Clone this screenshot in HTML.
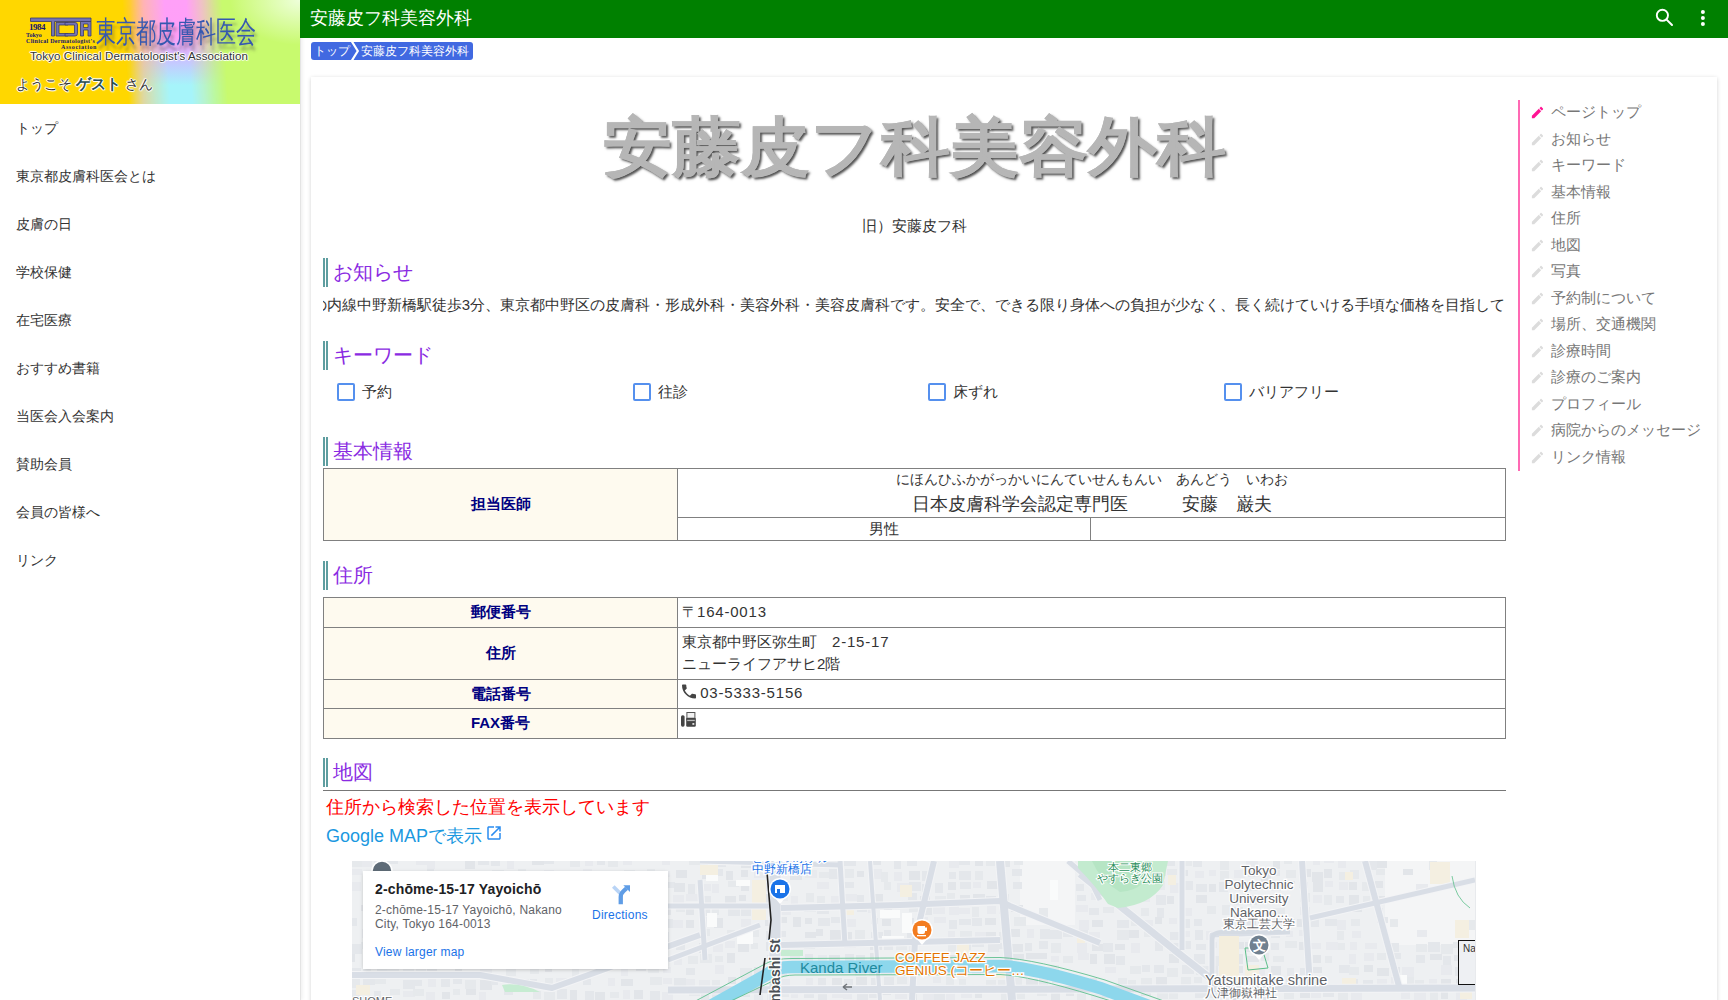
<!DOCTYPE html>
<html lang="ja"><head><meta charset="utf-8">
<style>
*{box-sizing:border-box}
html,body{margin:0;padding:0;width:1728px;height:1000px;overflow:hidden;background:#fff;font-family:"Liberation Sans",sans-serif;color:#333}
#side{position:absolute;left:0;top:0;width:301px;height:1000px;background:#fff;border-right:1px solid #e4e4e4;box-shadow:1px 0 4px rgba(0,0,0,.08);z-index:3}
#shead{position:absolute;left:0;top:0;width:300px;height:104px;overflow:hidden;background:linear-gradient(90deg,#ffd700 0,#ffd700 130px,#ffc870 144px,#d8f080 202px,#c8fa6e 214px,#c8fa6e 300px)}
#band{position:absolute;left:122px;top:0;width:100px;height:104px;transform:skewX(3.5deg);transform-origin:0 0;background:linear-gradient(180deg,#ffa0f8 0,#ff9ff8 35%,#c8c4ff 58%,#a6f4fa 82%,#a6f4fa 100%);-webkit-mask-image:linear-gradient(90deg,transparent 0,#000 42%,#000 64%,transparent 100%)}
#spot{position:absolute;left:0;top:0;width:300px;height:104px;background:radial-gradient(ellipse 70px 45px at 300px 0px,rgba(240,255,225,.95),rgba(240,255,225,0))}
.menu{position:absolute;left:16px;font-size:14px;color:#333;line-height:20px}
#bar{position:absolute;left:300px;top:0;width:1428px;height:38px;background:#008000;color:#fff;z-index:4}
#bar .t{position:absolute;left:10px;top:6px;font-size:18px;line-height:24px}
#crumb{position:absolute;left:311px;top:42px;height:18px;background:#4169e1;border-radius:3px;color:#fff;font-size:12px;line-height:18px}
#card{position:absolute;left:311px;top:77px;width:1406px;height:1000px;background:#fff;box-shadow:0 1px 4px rgba(0,0,0,.18)}
.h{position:absolute;left:323px;height:29px;border-left:5px double #5f9ea0;padding-left:5px;color:#8a2be2;font-size:20px;line-height:29px}
.tbl{position:absolute;left:323px;width:1183px;border-collapse:collapse}
.tbl td{border:1px solid #808080;padding:0}
.tbl th{border:1px solid #808080;background:#fefaef;color:#000080;font-weight:bold;font-size:15px;width:354px}

#crumb{white-space:nowrap;width:162px;overflow:hidden}#crumb .c1{display:inline-block;padding:0 0 0 2.5px;vertical-align:top}#crumb .c2{display:inline-block;padding:0 0 0 0;vertical-align:top}
#title{position:absolute;left:311px;width:1207px;top:98px;text-align:center;font-size:69px;font-weight:bold;line-height:100px;color:#b6b6b6;-webkit-text-stroke:0.4px #b6b6b6;text-shadow:2px 2px 2.5px #505050;transform:scaleY(0.93);transform-origin:50% 49px}
#old{position:absolute;left:311px;width:1207px;top:216px;text-align:center;font-size:15px;line-height:20px;color:#333}
#marq{position:absolute;left:323px;top:294px;width:1183px;height:22px;overflow:hidden;white-space:nowrap;font-size:15px;line-height:22px;color:#333}
#marq div{position:absolute;right:1px;top:0}
.kw{position:absolute;top:382px;height:20px;font-size:15px;line-height:20px;color:#333}
.kw .cb{display:inline-block;width:18px;height:18px;border:2px solid #5590ee;vertical-align:top;margin:1px 7px 0 0;border-radius:2px}
.ruby{font-size:14px;line-height:20px;color:#333;margin-top:-1px}
.rb{font-size:18px;line-height:26px;color:#333;margin-bottom:1px;position:relative;top:1.5px}
.t2 td{font-size:15px;padding-left:4px;line-height:22px;padding-bottom:2px}.dg{letter-spacing:0.8px}
#maprule{position:absolute;left:323px;top:790px;width:1183px;height:1px;background:#777}
#redtxt{position:absolute;left:326px;top:795px;font-size:18px;line-height:24px;color:#f00}
#gmap{position:absolute;left:326px;top:824px;font-size:18px;line-height:24px;color:#1b98e0}
#map{position:absolute;left:352px;top:861px;width:1124px;height:139px;background:#e8eaed;overflow:hidden}
#tocline{position:absolute;left:1518px;top:100px;width:2px;height:371px;background:#ff69b4}
.toc{position:absolute;left:1531px;height:20px;line-height:20px;font-size:15px;color:#777;white-space:nowrap}
.toc .pi{position:absolute;left:-1px;top:3px}
.toc .tt{position:absolute;left:20px;top:0}

.lg1{position:absolute;left:29px;top:22px;font-family:"Liberation Serif",serif;font-weight:bold;font-size:9px;line-height:10px;color:#14146e;letter-spacing:-0.5px}
.lg2{position:absolute;font-family:"Liberation Serif",serif;font-weight:bold;font-size:6px;line-height:6px;color:#14146e;white-space:nowrap}
#kai{position:absolute;left:96px;top:12px;font-size:30px;line-height:40px;color:#3558b0;white-space:nowrap;transform:scaleX(0.667);transform-origin:0 0;text-shadow:3px 5px 4px rgba(60,60,60,.45)}
#tcda{position:absolute;left:30px;top:48px;font-size:11.5px;line-height:16px;color:#333;white-space:nowrap;letter-spacing:0.1px;text-shadow:1px 0 0 rgba(255,255,255,.9),-1px 0 0 rgba(255,255,255,.9),0 1px 0 rgba(255,255,255,.9),0 -1px 0 rgba(255,255,255,.9),1px 1px 1px rgba(255,255,255,.7),-1px -1px 1px rgba(255,255,255,.7)}
#welcome{position:absolute;left:16px;top:74px;font-size:14px;line-height:20px;color:#333;white-space:nowrap;text-shadow:1px 0 0 rgba(255,255,255,.9),-1px 0 0 rgba(255,255,255,.9),0 1px 0 rgba(255,255,255,.9),0 -1px 0 rgba(255,255,255,.9),1px 1px 1px rgba(255,255,255,.7),-1px -1px 1px rgba(255,255,255,.7)}
#welcome b{color:#2a5050;font-weight:bold;font-size:15px}

#mcard{position:absolute;left:11px;top:10px;width:305px;height:98px;background:#fff;box-shadow:0 1px 4px -1px rgba(0,0,0,.3);font-family:"Liberation Sans",sans-serif}
#mcard .mt{position:absolute;left:12px;top:10px;font-size:14px;line-height:17px;font-weight:bold;color:#202124;white-space:nowrap;letter-spacing:0.15px}
#mcard .ma{position:absolute;left:12px;top:32px;font-size:12px;line-height:14px;color:#5f6368;white-space:nowrap;letter-spacing:0.2px}
#mcard .mv{position:absolute;left:12px;top:74px;font-size:12px;line-height:14px;color:#1a73e8;white-space:nowrap;letter-spacing:0.2px}
#mcard .md{position:absolute;left:229px;top:37px;font-size:12px;line-height:14px;color:#1a73e8;white-space:nowrap;letter-spacing:0.25px}
</style></head><body>
<div id="side">
 <div id="shead">
  <div id="band"></div><div id="spot"></div>
  <svg style="position:absolute;left:0;top:0" width="100" height="50" viewBox="0 0 100 50">
   <g fill="#7474b4" stroke="#3a3a6a" stroke-width="0.8">
    <path d="M30.5 18 H91 V21.5 H54.5 V36 H51.5 V21.5 H30.5 Z"/>
    <path d="M56 22.5 H68 V25 H59 V33.5 H68 V36 H56 Z"/>
    <path d="M65 22.5 H75 Q77.5 22.5 77.5 25 V33.5 Q77.5 36 75 36 H65 V33.5 H74.5 V25 H65 Z"/>
    <path d="M80.5 36 V21.5 H91 V36 H88 V30 H83.5 V36 Z M83.5 27.5 H88 V24 H83.5 Z"/>
   </g>
  </svg>
  <div class="lg1">1984</div>
  <div class="lg2" style="left:26px;top:32px">Tokyo</div>
  <div class="lg2" style="left:26px;top:38px;letter-spacing:0.3px">Clinical Dermatologist's</div>
  <div class="lg2" style="left:61px;top:44px;letter-spacing:0.6px">Association</div>
  <div id="kai">東京都皮膚科医会</div>
  <div id="tcda">Tokyo Clinical Dermatologist's Association</div>
  <div id="welcome">ようこそ <b>ゲスト</b> さん</div>
 </div>
 <div class="menu" style="top:118px">トップ</div>
 <div class="menu" style="top:166px">東京都皮膚科医会とは</div>
 <div class="menu" style="top:214px">皮膚の日</div>
 <div class="menu" style="top:262px">学校保健</div>
 <div class="menu" style="top:310px">在宅医療</div>
 <div class="menu" style="top:358px">おすすめ書籍</div>
 <div class="menu" style="top:406px">当医会入会案内</div>
 <div class="menu" style="top:454px">賛助会員</div>
 <div class="menu" style="top:502px">会員の皆様へ</div>
 <div class="menu" style="top:550px">リンク</div>
</div>

<div id="bar"><div class="t">安藤皮フ科美容外科</div>
 <svg style="position:absolute;left:1352px;top:4px" width="24" height="24" viewBox="0 0 24 24"><circle cx="10.4" cy="11.3" r="5.6" fill="none" stroke="#fff" stroke-width="1.9"/><path d="M14.6 15.6L20 21" stroke="#fff" stroke-width="2" stroke-linecap="round"/></svg>
 <svg style="position:absolute;left:1390px;top:6px" width="24" height="24" viewBox="0 0 24 24"><circle cx="12.9" cy="6.1" r="2" fill="#fff"/><circle cx="12.9" cy="12" r="2" fill="#fff"/><circle cx="12.9" cy="18" r="2" fill="#fff"/></svg>
</div>
<div id="crumb"><span class="c1">トップ</span><svg width="11" height="18" style="vertical-align:top"><path d="M1.6 -1 L7.8 9 L1.6 19" fill="none" stroke="#fff" stroke-width="2.2"/></svg><span class="c2">安藤皮フ科美容外科</span></div>
<div id="card"></div>
<div id="title">安藤皮フ科美容外科</div>
<div id="old">旧）安藤皮フ科</div>
<div class="h" style="top:258px">お知らせ</div>
<div id="marq"><div>丸の内線中野新橋駅徒歩3分、東京都中野区の皮膚科・形成外科・美容外科・美容皮膚科です。安全で、できる限り身体への負担が少なく、長く続けていける手頃な価格を目指して</div></div>
<div class="h" style="top:341px">キーワード</div>
<div class="kw" style="left:337px"><span class="cb"></span>予約</div>
<div class="kw" style="left:633px"><span class="cb"></span>往診</div>
<div class="kw" style="left:928px"><span class="cb"></span>床ずれ</div>
<div class="kw" style="left:1224px"><span class="cb"></span>バリアフリー</div>
<div class="h" style="top:437px">基本情報</div>
<table class="tbl" style="top:468px">
 <tr style="height:49px"><th rowspan="2">担当医師</th><td colspan="2" style="text-align:center"><div class="ruby">にほんひふかがっかいにんていせんもんい　あんどう　いわお</div><div class="rb">日本皮膚科学会認定専門医　　　安藤　巌夫</div></td></tr>
 <tr style="height:23px"><td style="text-align:center;width:413px;font-size:15px">男性</td><td></td></tr>
</table>
<div class="h" style="top:561px">住所</div>
<table class="tbl t2" style="top:597px">
 <tr style="height:30px"><th>郵便番号</th><td>〒<span class="dg">164-0013</span></td></tr>
 <tr style="height:52px"><th>住所</th><td>東京都中野区弥生町　<span class="dg">2-15-17</span><br>ニューライフアサヒ2階</td></tr>
 <tr style="height:29px"><th>電話番号</th><td><svg width="14" height="15" viewBox="3 3 18 18" style="vertical-align:-1px"><path fill="#444" d="M6.62 10.79c1.44 2.83 3.76 5.14 6.59 6.59l2.2-2.2c.27-.27.67-.36 1.02-.24 1.12.37 2.33.57 3.57.57.55 0 1 .45 1 1V20c0 .55-.45 1-1 1-9.39 0-17-7.61-17-17 0-.55.45-1 1-1h3.5c.55 0 1 .45 1 1 0 1.250.2 2.45.57 3.57.11.35.03.74-.25 1.02l-2.2 2.2z"/></svg> <span class="dg">03-5333-5156</span></td></tr>
 <tr style="height:30px"><th>FAX番号</th><td><svg width="15" height="15" viewBox="0 0 15 15" style="vertical-align:top;margin:0 0 0 -1px"><rect x="0" y="3.2" width="3.6" height="11.5" rx="1.6" fill="#444"/><rect x="5.9" y="0.5" width="8" height="7" fill="#f2f2f2" stroke="#555" stroke-width="1"/><rect x="5.2" y="5.8" width="9.6" height="9" rx="1.3" fill="#444"/><rect x="6.2" y="7.8" width="7.6" height="1.3" fill="#bbb"/><rect x="11.4" y="11" width="1.9" height="1.9" fill="#ddd"/></svg></td></tr>
</table>
<div class="h" style="top:758px">地図</div>
<div id="maprule"></div>
<div id="redtxt">住所から検索した位置を表示しています</div>
<div id="gmap">Google MAPで表示 <svg width="18" height="18" viewBox="0 0 24 24" style="vertical-align:0px;margin-left:-2px"><path fill="#2a8cf0" d="M19 19H5V5h7V3H5c-1.11 0-2 .9-2 2v14c0 1.1.89 2 2 2h14c1.1 0 2-.9 2-2v-7h-2v7zM14 3v2h3.59l-9.83 9.83 1.41 1.41L19 6.41V10h2V3h-7z"/></svg></div>
<div id="map"><svg width="1123" height="139" viewBox="0 0 1123 139" style="position:absolute;left:0;top:0"><rect width="1124" height="139" fill="#eef0f2"/><rect x="1033" y="0" width="90" height="84" fill="#f4f5f6"/><rect x="668" y="0" width="55" height="64" fill="#f4f5f6"/><rect x="788" y="0" width="20" height="9" fill="#f4f5f6"/><rect x="-1" y="-3" width="11" height="9" fill="#e6e9ec"/><rect x="10" y="-4" width="10" height="10" fill="#e8eaee"/><rect x="22" y="-1" width="7" height="10" fill="#e8eaee"/><rect x="35" y="-4" width="11" height="7" fill="#e4e7eb"/><rect x="64" y="-2" width="11" height="6" fill="#e8eaee"/><rect x="75" y="-2" width="8" height="10" fill="#e8eaee"/><rect x="113" y="-2" width="10" height="10" fill="#e2e5e9"/><rect x="126" y="-4" width="11" height="8" fill="#e4e7eb"/><rect x="139" y="-4" width="9" height="9" fill="#e4e7eb"/><rect x="155" y="-1" width="7" height="9" fill="#e8eaee"/><rect x="180" y="-4" width="12" height="8" fill="#e2e5e9"/><rect x="192" y="-3" width="10" height="6" fill="#e4e7eb"/><rect x="218" y="-1" width="10" height="7" fill="#e6e9ec"/><rect x="233" y="-4" width="8" height="9" fill="#e8eaee"/><rect x="245" y="-2" width="8" height="6" fill="#e4e7eb"/><rect x="256" y="-4" width="10" height="10" fill="#e6e9ec"/><rect x="271" y="-2" width="9" height="6" fill="#e8eaee"/><rect x="310" y="-2" width="8" height="6" fill="#e8eaee"/><rect x="337" y="-3" width="11" height="7" fill="#e6e9ec"/><rect x="348" y="-3" width="8" height="10" fill="#e6e9ec"/><rect x="363" y="-1" width="11" height="7" fill="#e4e7eb"/><rect x="373" y="-2" width="7" height="6" fill="#e6e9ec"/><rect x="389" y="-1" width="10" height="8" fill="#e2e5e9"/><rect x="400" y="-3" width="12" height="6" fill="#e8eaee"/><rect x="412" y="-2" width="11" height="10" fill="#e6e9ec"/><rect x="425" y="-2" width="8" height="6" fill="#e8eaee"/><rect x="439" y="-2" width="7" height="6" fill="#e2e5e9"/><rect x="453" y="-3" width="8" height="6" fill="#e8eaee"/><rect x="465" y="-4" width="12" height="10" fill="#e4e7eb"/><rect x="477" y="-4" width="9" height="8" fill="#e4e7eb"/><rect x="492" y="-3" width="12" height="8" fill="#e4e7eb"/><rect x="517" y="-2" width="12" height="6" fill="#e2e5e9"/><rect x="542" y="-1" width="7" height="9" fill="#e4e7eb"/><rect x="555" y="-4" width="10" height="9" fill="#e4e7eb"/><rect x="597" y="-1" width="10" height="8" fill="#e8eaee"/><rect x="607" y="-2" width="11" height="6" fill="#e4e7eb"/><rect x="623" y="-1" width="8" height="6" fill="#e2e5e9"/><rect x="634" y="-3" width="9" height="8" fill="#e6e9ec"/><rect x="649" y="-3" width="9" height="9" fill="#e2e5e9"/><rect x="662" y="-3" width="9" height="7" fill="#e6e9ec"/><rect x="726" y="-3" width="7" height="6" fill="#e4e7eb"/><rect x="740" y="-1" width="9" height="7" fill="#e8eaee"/><rect x="753" y="-2" width="12" height="10" fill="#e4e7eb"/><rect x="763" y="-2" width="9" height="10" fill="#e2e5e9"/><rect x="777" y="-1" width="11" height="6" fill="#e8eaee"/><rect x="815" y="-1" width="8" height="6" fill="#e4e7eb"/><rect x="828" y="-3" width="12" height="8" fill="#e6e9ec"/><rect x="841" y="-1" width="9" height="7" fill="#e4e7eb"/><rect x="868" y="-1" width="9" height="10" fill="#e6e9ec"/><rect x="894" y="-1" width="12" height="9" fill="#e8eaee"/><rect x="921" y="-1" width="7" height="9" fill="#e2e5e9"/><rect x="932" y="-3" width="8" height="6" fill="#e6e9ec"/><rect x="947" y="-2" width="7" height="8" fill="#e4e7eb"/><rect x="961" y="-2" width="7" height="6" fill="#e8eaee"/><rect x="972" y="-4" width="10" height="6" fill="#e8eaee"/><rect x="986" y="-3" width="8" height="10" fill="#e8eaee"/><rect x="1013" y="-1" width="12" height="10" fill="#e4e7eb"/><rect x="1025" y="-3" width="10" height="10" fill="#e2e5e9"/><rect x="1077" y="-1" width="8" height="10" fill="#e6e9ec"/><rect x="-1" y="8" width="11" height="6" fill="#e8eaee"/><rect x="38" y="10" width="10" height="9" fill="#e6e9ec"/><rect x="51" y="11" width="8" height="8" fill="#e2e5e9"/><rect x="75" y="8" width="7" height="8" fill="#e4e7eb"/><rect x="102" y="10" width="12" height="8" fill="#e6e9ec"/><rect x="113" y="10" width="7" height="9" fill="#e6e9ec"/><rect x="129" y="11" width="10" height="6" fill="#e6e9ec"/><rect x="140" y="9" width="12" height="10" fill="#e6e9ec"/><rect x="153" y="10" width="12" height="8" fill="#e2e5e9"/><rect x="166" y="8" width="8" height="7" fill="#e6e9ec"/><rect x="180" y="11" width="8" height="6" fill="#e4e7eb"/><rect x="192" y="9" width="10" height="10" fill="#e8eaee"/><rect x="205" y="10" width="7" height="6" fill="#e2e5e9"/><rect x="231" y="8" width="9" height="10" fill="#e8eaee"/><rect x="272" y="9" width="11" height="10" fill="#e6e9ec"/><rect x="295" y="8" width="8" height="8" fill="#e6e9ec"/><rect x="308" y="10" width="10" height="6" fill="#e8eaee"/><rect x="324" y="9" width="11" height="8" fill="#e2e5e9"/><rect x="350" y="11" width="8" height="7" fill="#e2e5e9"/><rect x="361" y="8" width="10" height="7" fill="#e4e7eb"/><rect x="374" y="10" width="7" height="9" fill="#e2e5e9"/><rect x="389" y="9" width="7" height="7" fill="#e2e5e9"/><rect x="402" y="9" width="12" height="8" fill="#e8eaee"/><rect x="414" y="10" width="8" height="6" fill="#e8eaee"/><rect x="438" y="9" width="12" height="10" fill="#e2e5e9"/><rect x="453" y="9" width="12" height="8" fill="#e8eaee"/><rect x="467" y="11" width="11" height="6" fill="#e6e9ec"/><rect x="477" y="8" width="10" height="10" fill="#e4e7eb"/><rect x="493" y="8" width="9" height="9" fill="#e6e9ec"/><rect x="505" y="10" width="7" height="6" fill="#e2e5e9"/><rect x="519" y="8" width="11" height="10" fill="#e8eaee"/><rect x="529" y="11" width="7" height="10" fill="#e6e9ec"/><rect x="542" y="11" width="8" height="9" fill="#e8eaee"/><rect x="557" y="10" width="11" height="9" fill="#e2e5e9"/><rect x="570" y="10" width="9" height="10" fill="#e4e7eb"/><rect x="597" y="11" width="7" height="7" fill="#e4e7eb"/><rect x="607" y="10" width="12" height="9" fill="#e4e7eb"/><rect x="623" y="10" width="8" height="9" fill="#e6e9ec"/><rect x="660" y="8" width="10" height="7" fill="#e4e7eb"/><rect x="727" y="9" width="7" height="8" fill="#e8eaee"/><rect x="740" y="10" width="9" height="10" fill="#e6e9ec"/><rect x="751" y="11" width="12" height="7" fill="#e4e7eb"/><rect x="765" y="10" width="9" height="10" fill="#e2e5e9"/><rect x="777" y="10" width="12" height="10" fill="#e6e9ec"/><rect x="802" y="8" width="12" height="7" fill="#e4e7eb"/><rect x="815" y="8" width="10" height="6" fill="#e6e9ec"/><rect x="829" y="9" width="7" height="6" fill="#e2e5e9"/><rect x="843" y="10" width="9" height="7" fill="#e8eaee"/><rect x="857" y="9" width="7" height="6" fill="#e8eaee"/><rect x="868" y="10" width="9" height="9" fill="#e6e9ec"/><rect x="882" y="9" width="11" height="8" fill="#e8eaee"/><rect x="896" y="10" width="11" height="6" fill="#e4e7eb"/><rect x="909" y="11" width="10" height="10" fill="#e2e5e9"/><rect x="921" y="9" width="7" height="6" fill="#e4e7eb"/><rect x="934" y="9" width="10" height="8" fill="#e6e9ec"/><rect x="947" y="8" width="12" height="8" fill="#e2e5e9"/><rect x="960" y="11" width="11" height="10" fill="#e2e5e9"/><rect x="972" y="8" width="8" height="9" fill="#e2e5e9"/><rect x="987" y="11" width="7" height="8" fill="#e6e9ec"/><rect x="998" y="9" width="9" height="9" fill="#e6e9ec"/><rect x="1024" y="8" width="9" height="6" fill="#e6e9ec"/><rect x="1051" y="8" width="10" height="6" fill="#e2e5e9"/><rect x="-3" y="21" width="12" height="9" fill="#e8eaee"/><rect x="12" y="23" width="11" height="8" fill="#e2e5e9"/><rect x="25" y="23" width="9" height="7" fill="#e4e7eb"/><rect x="37" y="20" width="7" height="9" fill="#e8eaee"/><rect x="48" y="22" width="10" height="10" fill="#e4e7eb"/><rect x="62" y="21" width="10" height="9" fill="#e6e9ec"/><rect x="76" y="21" width="10" height="7" fill="#e8eaee"/><rect x="87" y="23" width="9" height="8" fill="#e2e5e9"/><rect x="101" y="20" width="9" height="7" fill="#e8eaee"/><rect x="126" y="21" width="7" height="8" fill="#e6e9ec"/><rect x="142" y="21" width="11" height="7" fill="#e8eaee"/><rect x="168" y="22" width="8" height="8" fill="#e8eaee"/><rect x="178" y="23" width="9" height="10" fill="#e6e9ec"/><rect x="194" y="22" width="8" height="7" fill="#e4e7eb"/><rect x="207" y="22" width="8" height="6" fill="#e8eaee"/><rect x="218" y="23" width="12" height="9" fill="#e6e9ec"/><rect x="231" y="22" width="8" height="8" fill="#e4e7eb"/><rect x="257" y="21" width="7" height="7" fill="#e4e7eb"/><rect x="269" y="23" width="11" height="10" fill="#e8eaee"/><rect x="297" y="20" width="11" height="10" fill="#e6e9ec"/><rect x="311" y="21" width="12" height="6" fill="#e4e7eb"/><rect x="322" y="22" width="11" height="9" fill="#e2e5e9"/><rect x="336" y="23" width="7" height="10" fill="#e4e7eb"/><rect x="347" y="23" width="12" height="7" fill="#e8eaee"/><rect x="360" y="23" width="7" height="9" fill="#e8eaee"/><rect x="376" y="20" width="11" height="6" fill="#e6e9ec"/><rect x="389" y="22" width="8" height="8" fill="#e2e5e9"/><rect x="401" y="21" width="11" height="6" fill="#e6e9ec"/><rect x="414" y="22" width="7" height="8" fill="#e8eaee"/><rect x="428" y="20" width="9" height="9" fill="#e4e7eb"/><rect x="465" y="21" width="12" height="7" fill="#e8eaee"/><rect x="490" y="21" width="12" height="6" fill="#e4e7eb"/><rect x="532" y="21" width="7" height="8" fill="#e6e9ec"/><rect x="545" y="22" width="12" height="9" fill="#e8eaee"/><rect x="557" y="21" width="12" height="9" fill="#e4e7eb"/><rect x="570" y="23" width="8" height="8" fill="#e4e7eb"/><rect x="583" y="22" width="8" height="10" fill="#e4e7eb"/><rect x="596" y="21" width="8" height="8" fill="#e2e5e9"/><rect x="608" y="21" width="11" height="7" fill="#e4e7eb"/><rect x="621" y="21" width="8" height="6" fill="#e8eaee"/><rect x="635" y="20" width="12" height="8" fill="#e2e5e9"/><rect x="647" y="21" width="7" height="9" fill="#e4e7eb"/><rect x="661" y="21" width="9" height="7" fill="#e4e7eb"/><rect x="724" y="23" width="8" height="7" fill="#e4e7eb"/><rect x="739" y="23" width="12" height="7" fill="#e4e7eb"/><rect x="766" y="20" width="7" height="7" fill="#e8eaee"/><rect x="791" y="20" width="9" height="7" fill="#e4e7eb"/><rect x="805" y="20" width="8" height="9" fill="#e8eaee"/><rect x="818" y="22" width="11" height="10" fill="#e8eaee"/><rect x="831" y="20" width="10" height="9" fill="#e4e7eb"/><rect x="844" y="23" width="11" height="8" fill="#e4e7eb"/><rect x="857" y="23" width="7" height="8" fill="#e2e5e9"/><rect x="867" y="21" width="9" height="10" fill="#e4e7eb"/><rect x="883" y="20" width="8" height="10" fill="#e8eaee"/><rect x="895" y="23" width="11" height="7" fill="#e6e9ec"/><rect x="909" y="21" width="12" height="8" fill="#e6e9ec"/><rect x="919" y="20" width="10" height="10" fill="#e4e7eb"/><rect x="935" y="20" width="8" height="6" fill="#e2e5e9"/><rect x="947" y="21" width="9" height="6" fill="#e4e7eb"/><rect x="961" y="21" width="10" height="10" fill="#e2e5e9"/><rect x="973" y="20" width="8" height="6" fill="#e8eaee"/><rect x="987" y="21" width="9" height="8" fill="#e8eaee"/><rect x="997" y="21" width="8" height="8" fill="#e2e5e9"/><rect x="1010" y="21" width="9" height="9" fill="#e6e9ec"/><rect x="1023" y="20" width="8" height="7" fill="#e2e5e9"/><rect x="1064" y="23" width="12" height="7" fill="#e8eaee"/><rect x="24" y="34" width="12" height="8" fill="#e4e7eb"/><rect x="36" y="33" width="8" height="8" fill="#e2e5e9"/><rect x="64" y="32" width="10" height="6" fill="#e4e7eb"/><rect x="90" y="32" width="11" height="8" fill="#e6e9ec"/><rect x="101" y="34" width="8" height="7" fill="#e4e7eb"/><rect x="129" y="35" width="7" height="10" fill="#e4e7eb"/><rect x="140" y="32" width="10" height="6" fill="#e2e5e9"/><rect x="154" y="33" width="10" height="6" fill="#e6e9ec"/><rect x="180" y="33" width="12" height="9" fill="#e2e5e9"/><rect x="194" y="34" width="8" height="10" fill="#e4e7eb"/><rect x="207" y="33" width="12" height="6" fill="#e2e5e9"/><rect x="246" y="34" width="10" height="10" fill="#e4e7eb"/><rect x="270" y="33" width="11" height="10" fill="#e4e7eb"/><rect x="284" y="35" width="7" height="8" fill="#e4e7eb"/><rect x="298" y="34" width="11" height="7" fill="#e6e9ec"/><rect x="321" y="34" width="11" height="9" fill="#e8eaee"/><rect x="334" y="33" width="12" height="7" fill="#e8eaee"/><rect x="348" y="35" width="11" height="7" fill="#e4e7eb"/><rect x="373" y="35" width="11" height="7" fill="#e2e5e9"/><rect x="387" y="34" width="7" height="6" fill="#e2e5e9"/><rect x="412" y="33" width="10" height="9" fill="#e2e5e9"/><rect x="425" y="33" width="11" height="7" fill="#e8eaee"/><rect x="439" y="35" width="7" height="8" fill="#e8eaee"/><rect x="454" y="32" width="8" height="9" fill="#e6e9ec"/><rect x="465" y="35" width="8" height="7" fill="#e6e9ec"/><rect x="479" y="35" width="11" height="9" fill="#e8eaee"/><rect x="493" y="33" width="12" height="7" fill="#e8eaee"/><rect x="505" y="34" width="7" height="8" fill="#e4e7eb"/><rect x="519" y="33" width="12" height="8" fill="#e2e5e9"/><rect x="556" y="32" width="9" height="7" fill="#e4e7eb"/><rect x="568" y="35" width="10" height="9" fill="#e2e5e9"/><rect x="583" y="35" width="11" height="6" fill="#e6e9ec"/><rect x="595" y="32" width="8" height="7" fill="#e6e9ec"/><rect x="608" y="34" width="10" height="9" fill="#e2e5e9"/><rect x="621" y="33" width="12" height="9" fill="#e2e5e9"/><rect x="634" y="35" width="10" height="9" fill="#e2e5e9"/><rect x="648" y="33" width="9" height="8" fill="#e6e9ec"/><rect x="725" y="34" width="9" height="6" fill="#e4e7eb"/><rect x="739" y="32" width="9" height="7" fill="#e8eaee"/><rect x="765" y="34" width="10" height="9" fill="#e8eaee"/><rect x="779" y="33" width="8" height="7" fill="#e8eaee"/><rect x="789" y="34" width="9" height="7" fill="#e8eaee"/><rect x="804" y="34" width="10" height="10" fill="#e4e7eb"/><rect x="815" y="35" width="7" height="8" fill="#e2e5e9"/><rect x="844" y="34" width="11" height="8" fill="#e2e5e9"/><rect x="882" y="34" width="9" height="10" fill="#e6e9ec"/><rect x="895" y="34" width="10" height="10" fill="#e4e7eb"/><rect x="906" y="35" width="8" height="6" fill="#e8eaee"/><rect x="948" y="32" width="10" height="9" fill="#e6e9ec"/><rect x="961" y="34" width="9" height="8" fill="#e8eaee"/><rect x="972" y="34" width="8" height="10" fill="#e6e9ec"/><rect x="984" y="35" width="8" height="7" fill="#e4e7eb"/><rect x="997" y="34" width="10" height="10" fill="#e2e5e9"/><rect x="1011" y="35" width="7" height="8" fill="#e6e9ec"/><rect x="1025" y="35" width="8" height="7" fill="#e2e5e9"/><rect x="9" y="44" width="8" height="6" fill="#e2e5e9"/><rect x="35" y="45" width="12" height="9" fill="#e8eaee"/><rect x="50" y="47" width="7" height="8" fill="#e8eaee"/><rect x="63" y="46" width="12" height="8" fill="#e6e9ec"/><rect x="75" y="47" width="8" height="10" fill="#e6e9ec"/><rect x="88" y="45" width="9" height="7" fill="#e8eaee"/><rect x="101" y="44" width="9" height="7" fill="#e8eaee"/><rect x="115" y="47" width="8" height="8" fill="#e2e5e9"/><rect x="127" y="44" width="10" height="9" fill="#e6e9ec"/><rect x="140" y="46" width="7" height="6" fill="#e2e5e9"/><rect x="154" y="44" width="7" height="9" fill="#e8eaee"/><rect x="192" y="47" width="12" height="8" fill="#e8eaee"/><rect x="205" y="46" width="11" height="9" fill="#e6e9ec"/><rect x="219" y="47" width="7" height="10" fill="#e8eaee"/><rect x="244" y="46" width="7" height="8" fill="#e8eaee"/><rect x="259" y="45" width="8" height="6" fill="#e2e5e9"/><rect x="270" y="44" width="11" height="6" fill="#e4e7eb"/><rect x="282" y="45" width="9" height="6" fill="#e2e5e9"/><rect x="298" y="44" width="8" height="9" fill="#e8eaee"/><rect x="308" y="45" width="11" height="9" fill="#e2e5e9"/><rect x="324" y="44" width="9" height="7" fill="#e6e9ec"/><rect x="334" y="44" width="8" height="10" fill="#e2e5e9"/><rect x="347" y="47" width="11" height="8" fill="#e4e7eb"/><rect x="360" y="46" width="7" height="8" fill="#e6e9ec"/><rect x="376" y="46" width="12" height="9" fill="#e4e7eb"/><rect x="389" y="46" width="10" height="9" fill="#e4e7eb"/><rect x="427" y="46" width="12" height="8" fill="#e8eaee"/><rect x="440" y="44" width="9" height="6" fill="#e2e5e9"/><rect x="452" y="44" width="12" height="7" fill="#e6e9ec"/><rect x="465" y="46" width="12" height="7" fill="#e4e7eb"/><rect x="490" y="44" width="8" height="9" fill="#e8eaee"/><rect x="505" y="45" width="10" height="6" fill="#e4e7eb"/><rect x="516" y="46" width="9" height="6" fill="#e8eaee"/><rect x="532" y="45" width="8" height="9" fill="#e2e5e9"/><rect x="557" y="44" width="9" height="7" fill="#e6e9ec"/><rect x="568" y="45" width="12" height="9" fill="#e2e5e9"/><rect x="581" y="44" width="12" height="9" fill="#e8eaee"/><rect x="597" y="45" width="10" height="9" fill="#e8eaee"/><rect x="607" y="47" width="11" height="6" fill="#e8eaee"/><rect x="620" y="46" width="7" height="10" fill="#e6e9ec"/><rect x="635" y="45" width="9" height="8" fill="#e8eaee"/><rect x="647" y="47" width="10" height="6" fill="#e4e7eb"/><rect x="659" y="44" width="12" height="7" fill="#e2e5e9"/><rect x="687" y="47" width="9" height="10" fill="#e6e9ec"/><rect x="724" y="44" width="12" height="7" fill="#e8eaee"/><rect x="737" y="47" width="10" height="7" fill="#e4e7eb"/><rect x="751" y="46" width="11" height="6" fill="#e6e9ec"/><rect x="789" y="47" width="8" height="8" fill="#e6e9ec"/><rect x="805" y="47" width="7" height="10" fill="#e4e7eb"/><rect x="829" y="47" width="11" height="8" fill="#e8eaee"/><rect x="855" y="45" width="9" height="8" fill="#e6e9ec"/><rect x="870" y="44" width="8" height="10" fill="#e6e9ec"/><rect x="882" y="46" width="9" height="8" fill="#e6e9ec"/><rect x="921" y="47" width="12" height="8" fill="#e6e9ec"/><rect x="948" y="46" width="10" height="8" fill="#e8eaee"/><rect x="1000" y="44" width="10" height="7" fill="#e2e5e9"/><rect x="1024" y="47" width="7" height="9" fill="#e8eaee"/><rect x="-4" y="57" width="9" height="8" fill="#e4e7eb"/><rect x="11" y="59" width="8" height="10" fill="#e8eaee"/><rect x="22" y="56" width="7" height="10" fill="#e8eaee"/><rect x="35" y="58" width="7" height="8" fill="#e4e7eb"/><rect x="48" y="57" width="12" height="8" fill="#e8eaee"/><rect x="87" y="57" width="10" height="10" fill="#e4e7eb"/><rect x="101" y="56" width="10" height="9" fill="#e4e7eb"/><rect x="127" y="59" width="10" height="7" fill="#e2e5e9"/><rect x="139" y="56" width="11" height="9" fill="#e4e7eb"/><rect x="168" y="56" width="11" height="8" fill="#e8eaee"/><rect x="180" y="56" width="7" height="8" fill="#e4e7eb"/><rect x="191" y="56" width="11" height="10" fill="#e2e5e9"/><rect x="204" y="57" width="11" height="6" fill="#e6e9ec"/><rect x="219" y="58" width="11" height="10" fill="#e2e5e9"/><rect x="233" y="59" width="8" height="10" fill="#e4e7eb"/><rect x="244" y="56" width="11" height="9" fill="#e8eaee"/><rect x="270" y="57" width="11" height="7" fill="#e8eaee"/><rect x="285" y="56" width="12" height="6" fill="#e6e9ec"/><rect x="309" y="58" width="12" height="9" fill="#e4e7eb"/><rect x="321" y="59" width="10" height="8" fill="#e8eaee"/><rect x="334" y="59" width="8" height="8" fill="#e2e5e9"/><rect x="348" y="56" width="8" height="10" fill="#e8eaee"/><rect x="362" y="57" width="9" height="10" fill="#e2e5e9"/><rect x="389" y="58" width="10" height="8" fill="#e8eaee"/><rect x="413" y="59" width="11" height="6" fill="#e2e5e9"/><rect x="427" y="56" width="8" height="6" fill="#e2e5e9"/><rect x="441" y="56" width="8" height="10" fill="#e2e5e9"/><rect x="453" y="57" width="7" height="6" fill="#e2e5e9"/><rect x="466" y="57" width="12" height="8" fill="#e4e7eb"/><rect x="479" y="56" width="10" height="6" fill="#e4e7eb"/><rect x="493" y="58" width="11" height="8" fill="#e8eaee"/><rect x="519" y="57" width="7" height="6" fill="#e2e5e9"/><rect x="530" y="58" width="9" height="7" fill="#e2e5e9"/><rect x="555" y="57" width="7" height="9" fill="#e2e5e9"/><rect x="569" y="56" width="7" height="10" fill="#e8eaee"/><rect x="582" y="56" width="12" height="6" fill="#e8eaee"/><rect x="597" y="59" width="8" height="9" fill="#e4e7eb"/><rect x="607" y="58" width="12" height="6" fill="#e4e7eb"/><rect x="620" y="57" width="10" height="8" fill="#e4e7eb"/><rect x="633" y="57" width="11" height="7" fill="#e2e5e9"/><rect x="649" y="57" width="7" height="9" fill="#e8eaee"/><rect x="662" y="56" width="12" height="9" fill="#e6e9ec"/><rect x="727" y="59" width="10" height="10" fill="#e8eaee"/><rect x="740" y="59" width="11" height="7" fill="#e2e5e9"/><rect x="765" y="59" width="12" height="8" fill="#e4e7eb"/><rect x="779" y="57" width="7" height="8" fill="#e6e9ec"/><rect x="790" y="59" width="11" height="6" fill="#e8eaee"/><rect x="803" y="56" width="7" height="7" fill="#e2e5e9"/><rect x="817" y="57" width="8" height="6" fill="#e8eaee"/><rect x="830" y="58" width="8" height="9" fill="#e4e7eb"/><rect x="842" y="58" width="8" height="7" fill="#e4e7eb"/><rect x="895" y="56" width="9" height="8" fill="#e2e5e9"/><rect x="906" y="57" width="12" height="8" fill="#e2e5e9"/><rect x="934" y="58" width="9" height="8" fill="#e6e9ec"/><rect x="945" y="58" width="7" height="8" fill="#e2e5e9"/><rect x="959" y="57" width="8" height="9" fill="#e4e7eb"/><rect x="973" y="58" width="12" height="7" fill="#e4e7eb"/><rect x="985" y="59" width="9" height="10" fill="#e8eaee"/><rect x="999" y="58" width="9" height="7" fill="#e6e9ec"/><rect x="1025" y="56" width="11" height="6" fill="#e4e7eb"/><rect x="1038" y="58" width="8" height="8" fill="#e6e9ec"/><rect x="1114" y="59" width="11" height="10" fill="#e6e9ec"/><rect x="10" y="68" width="11" height="9" fill="#e8eaee"/><rect x="48" y="69" width="7" height="10" fill="#e2e5e9"/><rect x="62" y="69" width="8" height="8" fill="#e8eaee"/><rect x="77" y="70" width="7" height="10" fill="#e6e9ec"/><rect x="100" y="70" width="7" height="6" fill="#e2e5e9"/><rect x="113" y="69" width="7" height="9" fill="#e6e9ec"/><rect x="126" y="68" width="11" height="10" fill="#e2e5e9"/><rect x="155" y="70" width="10" height="7" fill="#e2e5e9"/><rect x="166" y="70" width="10" height="6" fill="#e4e7eb"/><rect x="180" y="71" width="11" height="8" fill="#e6e9ec"/><rect x="192" y="69" width="10" height="7" fill="#e6e9ec"/><rect x="206" y="69" width="10" height="7" fill="#e6e9ec"/><rect x="219" y="68" width="11" height="8" fill="#e6e9ec"/><rect x="232" y="69" width="7" height="8" fill="#e4e7eb"/><rect x="243" y="69" width="11" height="6" fill="#e8eaee"/><rect x="257" y="70" width="10" height="10" fill="#e2e5e9"/><rect x="296" y="70" width="8" height="9" fill="#e6e9ec"/><rect x="308" y="71" width="9" height="10" fill="#e4e7eb"/><rect x="348" y="68" width="10" height="7" fill="#e6e9ec"/><rect x="375" y="69" width="8" height="8" fill="#e6e9ec"/><rect x="400" y="69" width="7" height="7" fill="#e6e9ec"/><rect x="414" y="70" width="12" height="9" fill="#e4e7eb"/><rect x="426" y="70" width="8" height="6" fill="#e4e7eb"/><rect x="453" y="71" width="11" height="6" fill="#e2e5e9"/><rect x="464" y="68" width="7" height="7" fill="#e2e5e9"/><rect x="478" y="69" width="12" height="10" fill="#e2e5e9"/><rect x="493" y="71" width="7" height="8" fill="#e2e5e9"/><rect x="503" y="69" width="10" height="9" fill="#e6e9ec"/><rect x="519" y="71" width="12" height="6" fill="#e4e7eb"/><rect x="532" y="69" width="7" height="7" fill="#e4e7eb"/><rect x="555" y="71" width="10" height="10" fill="#e4e7eb"/><rect x="596" y="70" width="7" height="8" fill="#e8eaee"/><rect x="608" y="70" width="12" height="8" fill="#e6e9ec"/><rect x="623" y="71" width="11" height="10" fill="#e8eaee"/><rect x="634" y="71" width="10" height="7" fill="#e2e5e9"/><rect x="647" y="71" width="12" height="8" fill="#e6e9ec"/><rect x="659" y="68" width="9" height="8" fill="#e2e5e9"/><rect x="675" y="68" width="7" height="9" fill="#e8eaee"/><rect x="688" y="68" width="10" height="10" fill="#e4e7eb"/><rect x="698" y="69" width="12" height="9" fill="#e4e7eb"/><rect x="711" y="70" width="10" height="6" fill="#e4e7eb"/><rect x="726" y="69" width="10" height="6" fill="#e4e7eb"/><rect x="737" y="71" width="11" height="6" fill="#e8eaee"/><rect x="765" y="69" width="12" height="10" fill="#e6e9ec"/><rect x="777" y="69" width="10" height="8" fill="#e2e5e9"/><rect x="792" y="70" width="8" height="6" fill="#e6e9ec"/><rect x="818" y="71" width="11" height="8" fill="#e4e7eb"/><rect x="830" y="70" width="8" height="6" fill="#e8eaee"/><rect x="843" y="69" width="8" height="10" fill="#e4e7eb"/><rect x="854" y="70" width="10" height="9" fill="#e8eaee"/><rect x="870" y="70" width="10" height="7" fill="#e4e7eb"/><rect x="906" y="69" width="8" height="7" fill="#e8eaee"/><rect x="919" y="70" width="9" height="7" fill="#e4e7eb"/><rect x="934" y="70" width="7" height="6" fill="#e8eaee"/><rect x="947" y="69" width="9" height="6" fill="#e8eaee"/><rect x="985" y="70" width="7" height="9" fill="#e6e9ec"/><rect x="1000" y="70" width="9" height="7" fill="#e8eaee"/><rect x="1065" y="69" width="10" height="7" fill="#e8eaee"/><rect x="-2" y="83" width="12" height="10" fill="#e4e7eb"/><rect x="9" y="81" width="8" height="7" fill="#e6e9ec"/><rect x="24" y="82" width="9" height="10" fill="#e4e7eb"/><rect x="38" y="80" width="10" height="6" fill="#e8eaee"/><rect x="61" y="80" width="7" height="10" fill="#e2e5e9"/><rect x="75" y="83" width="11" height="9" fill="#e8eaee"/><rect x="90" y="81" width="12" height="7" fill="#e8eaee"/><rect x="113" y="83" width="8" height="7" fill="#e8eaee"/><rect x="152" y="81" width="10" height="10" fill="#e6e9ec"/><rect x="167" y="80" width="10" height="10" fill="#e2e5e9"/><rect x="181" y="83" width="8" height="10" fill="#e6e9ec"/><rect x="194" y="81" width="7" height="8" fill="#e2e5e9"/><rect x="207" y="82" width="8" height="9" fill="#e6e9ec"/><rect x="217" y="83" width="10" height="8" fill="#e8eaee"/><rect x="233" y="83" width="11" height="9" fill="#e4e7eb"/><rect x="246" y="83" width="9" height="7" fill="#e6e9ec"/><rect x="256" y="82" width="8" height="10" fill="#e8eaee"/><rect x="282" y="83" width="10" height="8" fill="#e6e9ec"/><rect x="298" y="80" width="9" height="7" fill="#e8eaee"/><rect x="308" y="82" width="8" height="9" fill="#e2e5e9"/><rect x="324" y="81" width="9" height="8" fill="#e4e7eb"/><rect x="347" y="82" width="9" height="10" fill="#e2e5e9"/><rect x="361" y="83" width="10" height="8" fill="#e8eaee"/><rect x="373" y="80" width="10" height="7" fill="#e8eaee"/><rect x="386" y="82" width="11" height="9" fill="#e2e5e9"/><rect x="399" y="82" width="7" height="6" fill="#e6e9ec"/><rect x="414" y="81" width="8" height="9" fill="#e2e5e9"/><rect x="427" y="83" width="11" height="6" fill="#e8eaee"/><rect x="452" y="81" width="11" height="7" fill="#e4e7eb"/><rect x="492" y="80" width="12" height="7" fill="#e8eaee"/><rect x="518" y="81" width="12" height="8" fill="#e2e5e9"/><rect x="532" y="82" width="9" height="7" fill="#e4e7eb"/><rect x="544" y="81" width="11" height="8" fill="#e6e9ec"/><rect x="557" y="83" width="9" height="7" fill="#e8eaee"/><rect x="596" y="82" width="8" height="9" fill="#e6e9ec"/><rect x="610" y="82" width="9" height="7" fill="#e4e7eb"/><rect x="620" y="80" width="12" height="6" fill="#e4e7eb"/><rect x="636" y="83" width="11" height="8" fill="#e4e7eb"/><rect x="647" y="82" width="10" height="6" fill="#e4e7eb"/><rect x="659" y="83" width="12" height="8" fill="#e2e5e9"/><rect x="673" y="82" width="7" height="8" fill="#e4e7eb"/><rect x="687" y="80" width="9" height="8" fill="#e4e7eb"/><rect x="699" y="82" width="10" height="10" fill="#e6e9ec"/><rect x="725" y="82" width="10" height="10" fill="#e8eaee"/><rect x="740" y="83" width="11" height="7" fill="#e2e5e9"/><rect x="751" y="82" width="10" height="9" fill="#e4e7eb"/><rect x="763" y="83" width="10" height="6" fill="#e2e5e9"/><rect x="779" y="82" width="9" height="10" fill="#e8eaee"/><rect x="803" y="80" width="8" height="10" fill="#e4e7eb"/><rect x="818" y="82" width="9" height="10" fill="#e4e7eb"/><rect x="828" y="80" width="11" height="8" fill="#e4e7eb"/><rect x="844" y="83" width="10" height="6" fill="#e4e7eb"/><rect x="857" y="81" width="8" height="6" fill="#e8eaee"/><rect x="869" y="80" width="10" height="10" fill="#e4e7eb"/><rect x="880" y="81" width="12" height="7" fill="#e2e5e9"/><rect x="893" y="81" width="11" height="10" fill="#e2e5e9"/><rect x="919" y="82" width="8" height="7" fill="#e4e7eb"/><rect x="933" y="80" width="12" height="7" fill="#e6e9ec"/><rect x="947" y="81" width="12" height="8" fill="#e2e5e9"/><rect x="958" y="82" width="11" height="6" fill="#e8eaee"/><rect x="974" y="81" width="12" height="8" fill="#e8eaee"/><rect x="986" y="82" width="7" height="7" fill="#e6e9ec"/><rect x="998" y="81" width="7" height="8" fill="#e8eaee"/><rect x="1013" y="82" width="12" height="6" fill="#e8eaee"/><rect x="1036" y="82" width="11" height="9" fill="#e4e7eb"/><rect x="1064" y="83" width="11" height="8" fill="#e6e9ec"/><rect x="1076" y="81" width="12" height="10" fill="#e4e7eb"/><rect x="1089" y="83" width="12" height="10" fill="#e6e9ec"/><rect x="1101" y="81" width="7" height="6" fill="#e6e9ec"/><rect x="1117" y="81" width="8" height="9" fill="#e2e5e9"/><rect x="-4" y="93" width="7" height="8" fill="#e2e5e9"/><rect x="48" y="92" width="10" height="7" fill="#e6e9ec"/><rect x="61" y="93" width="11" height="6" fill="#e2e5e9"/><rect x="87" y="93" width="10" height="7" fill="#e4e7eb"/><rect x="114" y="95" width="10" height="9" fill="#e4e7eb"/><rect x="126" y="92" width="10" height="8" fill="#e6e9ec"/><rect x="142" y="94" width="7" height="9" fill="#e2e5e9"/><rect x="155" y="94" width="8" height="7" fill="#e4e7eb"/><rect x="167" y="94" width="7" height="8" fill="#e2e5e9"/><rect x="181" y="94" width="7" height="7" fill="#e2e5e9"/><rect x="206" y="94" width="12" height="9" fill="#e6e9ec"/><rect x="218" y="94" width="12" height="8" fill="#e8eaee"/><rect x="230" y="95" width="7" height="7" fill="#e2e5e9"/><rect x="244" y="94" width="11" height="9" fill="#e8eaee"/><rect x="257" y="94" width="7" height="8" fill="#e6e9ec"/><rect x="272" y="94" width="9" height="7" fill="#e4e7eb"/><rect x="297" y="95" width="12" height="8" fill="#e4e7eb"/><rect x="322" y="95" width="8" height="9" fill="#e8eaee"/><rect x="336" y="95" width="10" height="8" fill="#e6e9ec"/><rect x="348" y="93" width="12" height="9" fill="#e6e9ec"/><rect x="363" y="95" width="8" height="6" fill="#e6e9ec"/><rect x="375" y="92" width="8" height="10" fill="#e2e5e9"/><rect x="415" y="94" width="9" height="8" fill="#e4e7eb"/><rect x="438" y="92" width="10" height="7" fill="#e6e9ec"/><rect x="453" y="93" width="8" height="10" fill="#e4e7eb"/><rect x="466" y="94" width="9" height="6" fill="#e8eaee"/><rect x="477" y="94" width="11" height="7" fill="#e2e5e9"/><rect x="493" y="93" width="9" height="9" fill="#e4e7eb"/><rect x="504" y="94" width="9" height="9" fill="#e4e7eb"/><rect x="518" y="92" width="9" height="10" fill="#e2e5e9"/><rect x="545" y="95" width="10" height="8" fill="#e8eaee"/><rect x="555" y="92" width="9" height="6" fill="#e8eaee"/><rect x="571" y="93" width="12" height="7" fill="#e8eaee"/><rect x="596" y="94" width="8" height="9" fill="#e2e5e9"/><rect x="607" y="93" width="8" height="6" fill="#e8eaee"/><rect x="660" y="93" width="12" height="6" fill="#e2e5e9"/><rect x="674" y="92" width="11" height="6" fill="#e2e5e9"/><rect x="685" y="92" width="10" height="6" fill="#e2e5e9"/><rect x="699" y="95" width="8" height="6" fill="#e8eaee"/><rect x="711" y="95" width="10" height="7" fill="#e6e9ec"/><rect x="726" y="92" width="11" height="7" fill="#e8eaee"/><rect x="738" y="93" width="7" height="10" fill="#e2e5e9"/><rect x="752" y="93" width="11" height="10" fill="#e2e5e9"/><rect x="764" y="95" width="9" height="9" fill="#e4e7eb"/><rect x="817" y="93" width="10" height="9" fill="#e2e5e9"/><rect x="842" y="93" width="11" height="10" fill="#e4e7eb"/><rect x="857" y="95" width="11" height="10" fill="#e6e9ec"/><rect x="869" y="92" width="9" height="9" fill="#e2e5e9"/><rect x="882" y="93" width="9" height="10" fill="#e2e5e9"/><rect x="895" y="95" width="12" height="6" fill="#e2e5e9"/><rect x="909" y="92" width="8" height="8" fill="#e6e9ec"/><rect x="921" y="95" width="11" height="6" fill="#e6e9ec"/><rect x="961" y="94" width="8" height="8" fill="#e2e5e9"/><rect x="973" y="95" width="7" height="7" fill="#e6e9ec"/><rect x="997" y="93" width="7" height="10" fill="#e8eaee"/><rect x="1012" y="92" width="10" height="8" fill="#e8eaee"/><rect x="1025" y="92" width="9" height="7" fill="#e6e9ec"/><rect x="1037" y="92" width="12" height="6" fill="#e4e7eb"/><rect x="1064" y="94" width="9" height="8" fill="#e4e7eb"/><rect x="1078" y="93" width="12" height="6" fill="#e2e5e9"/><rect x="1091" y="95" width="8" height="10" fill="#e4e7eb"/><rect x="1102" y="94" width="12" height="6" fill="#e4e7eb"/><rect x="1116" y="94" width="10" height="7" fill="#e4e7eb"/><rect x="-1" y="107" width="10" height="6" fill="#e4e7eb"/><rect x="11" y="106" width="8" height="6" fill="#e6e9ec"/><rect x="25" y="107" width="11" height="7" fill="#e4e7eb"/><rect x="35" y="105" width="12" height="9" fill="#e6e9ec"/><rect x="51" y="104" width="11" height="10" fill="#e6e9ec"/><rect x="64" y="107" width="10" height="7" fill="#e6e9ec"/><rect x="75" y="104" width="10" height="10" fill="#e2e5e9"/><rect x="103" y="105" width="7" height="6" fill="#e2e5e9"/><rect x="128" y="107" width="12" height="10" fill="#e8eaee"/><rect x="154" y="105" width="10" height="10" fill="#e6e9ec"/><rect x="178" y="107" width="9" height="6" fill="#e6e9ec"/><rect x="193" y="105" width="7" height="6" fill="#e2e5e9"/><rect x="220" y="106" width="7" height="10" fill="#e6e9ec"/><rect x="244" y="104" width="10" height="7" fill="#e6e9ec"/><rect x="269" y="107" width="7" height="8" fill="#e8eaee"/><rect x="284" y="104" width="10" height="6" fill="#e2e5e9"/><rect x="296" y="106" width="11" height="6" fill="#e6e9ec"/><rect x="311" y="106" width="8" height="6" fill="#e8eaee"/><rect x="334" y="107" width="9" height="7" fill="#e4e7eb"/><rect x="363" y="104" width="9" height="9" fill="#e8eaee"/><rect x="388" y="107" width="12" height="10" fill="#e6e9ec"/><rect x="402" y="106" width="7" height="8" fill="#e2e5e9"/><rect x="414" y="106" width="11" height="10" fill="#e4e7eb"/><rect x="428" y="107" width="7" height="8" fill="#e4e7eb"/><rect x="440" y="106" width="7" height="6" fill="#e6e9ec"/><rect x="479" y="104" width="7" height="6" fill="#e8eaee"/><rect x="493" y="104" width="8" height="6" fill="#e8eaee"/><rect x="503" y="106" width="11" height="9" fill="#e8eaee"/><rect x="517" y="106" width="11" height="9" fill="#e8eaee"/><rect x="529" y="104" width="11" height="10" fill="#e8eaee"/><rect x="569" y="107" width="11" height="8" fill="#e4e7eb"/><rect x="581" y="106" width="9" height="9" fill="#e6e9ec"/><rect x="594" y="107" width="10" height="8" fill="#e8eaee"/><rect x="607" y="104" width="7" height="10" fill="#e8eaee"/><rect x="620" y="107" width="9" height="7" fill="#e8eaee"/><rect x="646" y="105" width="9" height="10" fill="#e2e5e9"/><rect x="662" y="105" width="11" height="9" fill="#e2e5e9"/><rect x="673" y="105" width="12" height="10" fill="#e6e9ec"/><rect x="687" y="106" width="12" height="9" fill="#e2e5e9"/><rect x="699" y="104" width="8" height="6" fill="#e6e9ec"/><rect x="753" y="106" width="11" height="6" fill="#e8eaee"/><rect x="778" y="105" width="11" height="8" fill="#e6e9ec"/><rect x="790" y="104" width="8" height="7" fill="#e4e7eb"/><rect x="802" y="104" width="10" height="8" fill="#e4e7eb"/><rect x="815" y="107" width="11" height="9" fill="#e6e9ec"/><rect x="830" y="104" width="12" height="9" fill="#e4e7eb"/><rect x="844" y="105" width="10" height="9" fill="#e6e9ec"/><rect x="854" y="105" width="12" height="10" fill="#e4e7eb"/><rect x="868" y="105" width="8" height="7" fill="#e8eaee"/><rect x="880" y="105" width="11" height="7" fill="#e2e5e9"/><rect x="895" y="104" width="9" height="6" fill="#e2e5e9"/><rect x="906" y="107" width="7" height="10" fill="#e8eaee"/><rect x="919" y="105" width="10" height="9" fill="#e2e5e9"/><rect x="935" y="107" width="7" height="8" fill="#e6e9ec"/><rect x="948" y="107" width="11" height="7" fill="#e4e7eb"/><rect x="961" y="106" width="9" height="6" fill="#e2e5e9"/><rect x="987" y="104" width="11" height="8" fill="#e4e7eb"/><rect x="997" y="106" width="10" height="8" fill="#e6e9ec"/><rect x="1012" y="104" width="9" height="7" fill="#e2e5e9"/><rect x="1025" y="107" width="12" height="8" fill="#e2e5e9"/><rect x="1039" y="106" width="9" height="6" fill="#e2e5e9"/><rect x="1050" y="106" width="12" height="10" fill="#e8eaee"/><rect x="1089" y="104" width="11" height="10" fill="#e8eaee"/><rect x="1103" y="106" width="8" height="9" fill="#e4e7eb"/><rect x="1114" y="106" width="10" height="6" fill="#e4e7eb"/><rect x="-1" y="118" width="9" height="9" fill="#e6e9ec"/><rect x="11" y="116" width="12" height="8" fill="#e4e7eb"/><rect x="23" y="116" width="11" height="7" fill="#e6e9ec"/><rect x="51" y="119" width="12" height="9" fill="#e4e7eb"/><rect x="61" y="119" width="9" height="6" fill="#e4e7eb"/><rect x="76" y="117" width="8" height="9" fill="#e8eaee"/><rect x="89" y="118" width="9" height="8" fill="#e4e7eb"/><rect x="101" y="116" width="9" height="7" fill="#e4e7eb"/><rect x="113" y="119" width="11" height="9" fill="#e6e9ec"/><rect x="128" y="119" width="12" height="10" fill="#e2e5e9"/><rect x="139" y="117" width="7" height="7" fill="#e4e7eb"/><rect x="167" y="118" width="10" height="8" fill="#e6e9ec"/><rect x="178" y="118" width="7" height="9" fill="#e4e7eb"/><rect x="193" y="117" width="8" height="7" fill="#e6e9ec"/><rect x="204" y="117" width="11" height="9" fill="#e8eaee"/><rect x="231" y="118" width="8" height="6" fill="#e4e7eb"/><rect x="256" y="117" width="7" height="8" fill="#e8eaee"/><rect x="269" y="118" width="12" height="7" fill="#e2e5e9"/><rect x="298" y="116" width="12" height="8" fill="#e6e9ec"/><rect x="311" y="117" width="9" height="6" fill="#e8eaee"/><rect x="322" y="117" width="12" height="9" fill="#e4e7eb"/><rect x="334" y="118" width="9" height="7" fill="#e8eaee"/><rect x="347" y="119" width="11" height="6" fill="#e8eaee"/><rect x="360" y="119" width="8" height="7" fill="#e6e9ec"/><rect x="376" y="116" width="8" height="7" fill="#e2e5e9"/><rect x="389" y="116" width="11" height="9" fill="#e4e7eb"/><rect x="426" y="118" width="12" height="10" fill="#e8eaee"/><rect x="454" y="117" width="7" height="7" fill="#e8eaee"/><rect x="466" y="117" width="8" height="8" fill="#e4e7eb"/><rect x="480" y="117" width="10" height="9" fill="#e2e5e9"/><rect x="492" y="118" width="9" height="7" fill="#e4e7eb"/><rect x="504" y="116" width="11" height="10" fill="#e2e5e9"/><rect x="519" y="117" width="7" height="9" fill="#e4e7eb"/><rect x="532" y="116" width="10" height="10" fill="#e4e7eb"/><rect x="545" y="116" width="10" height="7" fill="#e6e9ec"/><rect x="581" y="116" width="8" height="6" fill="#e8eaee"/><rect x="594" y="116" width="8" height="8" fill="#e6e9ec"/><rect x="607" y="118" width="7" height="7" fill="#e6e9ec"/><rect x="634" y="119" width="10" height="10" fill="#e6e9ec"/><rect x="646" y="119" width="10" height="6" fill="#e6e9ec"/><rect x="661" y="117" width="9" height="10" fill="#e6e9ec"/><rect x="674" y="118" width="12" height="10" fill="#e2e5e9"/><rect x="687" y="117" width="9" height="7" fill="#e4e7eb"/><rect x="700" y="116" width="12" height="6" fill="#e4e7eb"/><rect x="711" y="116" width="8" height="7" fill="#e6e9ec"/><rect x="726" y="117" width="8" height="9" fill="#e2e5e9"/><rect x="738" y="117" width="7" height="7" fill="#e2e5e9"/><rect x="766" y="117" width="9" height="7" fill="#e6e9ec"/><rect x="776" y="119" width="8" height="8" fill="#e6e9ec"/><rect x="789" y="117" width="11" height="8" fill="#e6e9ec"/><rect x="804" y="116" width="11" height="9" fill="#e2e5e9"/><rect x="829" y="116" width="10" height="9" fill="#e6e9ec"/><rect x="842" y="116" width="8" height="6" fill="#e6e9ec"/><rect x="857" y="119" width="8" height="10" fill="#e6e9ec"/><rect x="868" y="118" width="10" height="10" fill="#e4e7eb"/><rect x="882" y="117" width="9" height="10" fill="#e2e5e9"/><rect x="894" y="118" width="10" height="9" fill="#e6e9ec"/><rect x="908" y="117" width="10" height="10" fill="#e8eaee"/><rect x="921" y="117" width="7" height="6" fill="#e8eaee"/><rect x="934" y="118" width="10" height="10" fill="#e4e7eb"/><rect x="948" y="119" width="11" height="6" fill="#e8eaee"/><rect x="960" y="118" width="10" height="10" fill="#e6e9ec"/><rect x="998" y="118" width="8" height="7" fill="#e4e7eb"/><rect x="1011" y="119" width="10" height="6" fill="#e4e7eb"/><rect x="1025" y="118" width="10" height="7" fill="#e8eaee"/><rect x="1039" y="116" width="7" height="10" fill="#e8eaee"/><rect x="1051" y="116" width="11" height="8" fill="#e6e9ec"/><rect x="1063" y="119" width="9" height="9" fill="#e6e9ec"/><rect x="1077" y="118" width="8" height="9" fill="#e8eaee"/><rect x="1089" y="118" width="10" height="7" fill="#e2e5e9"/><rect x="1104" y="118" width="12" height="9" fill="#e2e5e9"/><rect x="1117" y="119" width="10" height="9" fill="#e6e9ec"/><rect x="-3" y="129" width="11" height="9" fill="#e6e9ec"/><rect x="22" y="130" width="7" height="10" fill="#e4e7eb"/><rect x="38" y="128" width="10" height="6" fill="#e6e9ec"/><rect x="51" y="130" width="12" height="6" fill="#e8eaee"/><rect x="61" y="128" width="11" height="7" fill="#e6e9ec"/><rect x="74" y="131" width="9" height="9" fill="#e8eaee"/><rect x="90" y="131" width="8" height="7" fill="#e2e5e9"/><rect x="101" y="128" width="7" height="6" fill="#e6e9ec"/><rect x="114" y="128" width="10" height="6" fill="#e2e5e9"/><rect x="127" y="131" width="7" height="8" fill="#e8eaee"/><rect x="152" y="128" width="9" height="6" fill="#e4e7eb"/><rect x="181" y="130" width="8" height="8" fill="#e6e9ec"/><rect x="192" y="131" width="11" height="10" fill="#e6e9ec"/><rect x="205" y="128" width="10" height="10" fill="#e4e7eb"/><rect x="218" y="129" width="7" height="10" fill="#e2e5e9"/><rect x="233" y="130" width="9" height="9" fill="#e4e7eb"/><rect x="243" y="131" width="10" height="8" fill="#e2e5e9"/><rect x="258" y="131" width="9" height="6" fill="#e6e9ec"/><rect x="271" y="129" width="7" height="9" fill="#e8eaee"/><rect x="282" y="129" width="9" height="9" fill="#e2e5e9"/><rect x="298" y="130" width="10" height="10" fill="#e4e7eb"/><rect x="310" y="131" width="11" height="8" fill="#e8eaee"/><rect x="337" y="129" width="11" height="6" fill="#e6e9ec"/><rect x="349" y="130" width="8" height="10" fill="#e4e7eb"/><rect x="360" y="131" width="10" height="7" fill="#e4e7eb"/><rect x="374" y="131" width="7" height="10" fill="#e4e7eb"/><rect x="387" y="129" width="11" height="7" fill="#e4e7eb"/><rect x="402" y="131" width="9" height="10" fill="#e8eaee"/><rect x="415" y="131" width="11" height="10" fill="#e8eaee"/><rect x="426" y="128" width="11" height="8" fill="#e6e9ec"/><rect x="439" y="129" width="7" height="8" fill="#e8eaee"/><rect x="452" y="130" width="10" height="7" fill="#e4e7eb"/><rect x="466" y="131" width="9" height="9" fill="#e4e7eb"/><rect x="480" y="131" width="12" height="6" fill="#e8eaee"/><rect x="491" y="130" width="9" height="8" fill="#e8eaee"/><rect x="505" y="130" width="11" height="9" fill="#e4e7eb"/><rect x="517" y="128" width="12" height="9" fill="#e4e7eb"/><rect x="530" y="128" width="9" height="6" fill="#e2e5e9"/><rect x="543" y="128" width="12" height="10" fill="#e8eaee"/><rect x="556" y="131" width="9" height="8" fill="#e2e5e9"/><rect x="571" y="131" width="11" height="10" fill="#e8eaee"/><rect x="582" y="130" width="11" height="10" fill="#e4e7eb"/><rect x="594" y="130" width="9" height="9" fill="#e8eaee"/><rect x="609" y="130" width="11" height="7" fill="#e8eaee"/><rect x="623" y="129" width="7" height="8" fill="#e2e5e9"/><rect x="649" y="131" width="12" height="10" fill="#e6e9ec"/><rect x="661" y="130" width="12" height="8" fill="#e6e9ec"/><rect x="685" y="128" width="10" height="7" fill="#e6e9ec"/><rect x="699" y="130" width="9" height="9" fill="#e2e5e9"/><rect x="714" y="128" width="8" height="7" fill="#e2e5e9"/><rect x="725" y="131" width="9" height="8" fill="#e6e9ec"/><rect x="739" y="131" width="12" height="9" fill="#e8eaee"/><rect x="750" y="128" width="11" height="9" fill="#e2e5e9"/><rect x="765" y="128" width="10" height="10" fill="#e8eaee"/><rect x="789" y="129" width="10" height="6" fill="#e2e5e9"/><rect x="805" y="131" width="11" height="7" fill="#e6e9ec"/><rect x="817" y="130" width="9" height="8" fill="#e6e9ec"/><rect x="843" y="131" width="12" height="6" fill="#e4e7eb"/><rect x="857" y="130" width="12" height="7" fill="#e6e9ec"/><rect x="880" y="129" width="7" height="8" fill="#e4e7eb"/><rect x="894" y="131" width="10" height="6" fill="#e6e9ec"/><rect x="908" y="130" width="11" height="10" fill="#e2e5e9"/><rect x="932" y="131" width="10" height="7" fill="#e6e9ec"/><rect x="948" y="129" width="10" height="8" fill="#e2e5e9"/><rect x="959" y="131" width="10" height="6" fill="#e8eaee"/><rect x="971" y="130" width="11" height="6" fill="#e4e7eb"/><rect x="986" y="130" width="10" height="9" fill="#e6e9ec"/><rect x="999" y="131" width="11" height="8" fill="#e8eaee"/><rect x="1049" y="128" width="9" height="10" fill="#e8eaee"/><rect x="1062" y="130" width="12" height="9" fill="#e8eaee"/><rect x="1078" y="131" width="8" height="9" fill="#e6e9ec"/><rect x="1089" y="131" width="7" height="7" fill="#e2e5e9"/><rect x="1104" y="131" width="11" height="9" fill="#e8eaee"/><rect x="354" y="10" width="12" height="10" fill="#fafbfb"/><rect x="355" y="52" width="10" height="14" fill="#fafbfb"/><rect x="385" y="69" width="16" height="14" fill="#fafbfb"/><rect x="384" y="19" width="14" height="6" fill="#fafbfb"/><rect x="528" y="49" width="20" height="8" fill="#fafbfb"/><rect x="530" y="75" width="22" height="7" fill="#fafbfb"/><rect x="550" y="52" width="10" height="20" fill="#fafbfb"/><rect x="698" y="19" width="8" height="20" fill="#fafbfb"/><rect x="1108" y="99" width="10" height="16" fill="#fafbfb"/><rect x="1043" y="114" width="12" height="12" fill="#fafbfb"/><rect x="22" y="19" width="8" height="12" fill="#fafbfb"/><rect x="1078" y="1" width="20" height="22" fill="#f4efe1"/><rect x="1103" y="59" width="14" height="18" fill="#f4efe1"/><rect x="1108" y="124" width="12" height="14" fill="#f4efe1"/><rect x="990" y="117" width="14" height="14" fill="#f4efe1"/><rect x="643" y="107" width="10" height="10" fill="#f4efe1"/><rect x="348" y="4" width="18" height="10" fill="#f4efe1"/><rect x="400" y="19" width="14" height="40" fill="#f4efe1"/><rect x="548" y="24" width="12" height="12" fill="#f4efe1"/><rect x="893" y="104" width="14" height="30" fill="#f4efe1"/><rect x="4" y="124" width="14" height="10" fill="#f4efe1"/><rect x="725" y="74" width="8" height="8" fill="#f4efe1"/><rect x="605" y="79" width="12" height="14" fill="#f4efe1"/><rect x="816" y="14" width="8" height="10" fill="#f4efe1"/><rect x="993" y="11" width="8" height="8" fill="#f4efe1"/><rect x="490" y="44" width="12" height="10" fill="#f4efe1"/><path d="M423 0 L423 139" stroke="#f3f4f6" stroke-width="13" fill="none" stroke-linejoin="round"/><path d="M429 47 L548 44 L648 40 L658 45 L748 82" stroke="#f3f4f6" stroke-width="8" fill="none" stroke-linejoin="round"/><path d="M429 84 L648 79" stroke="#f3f4f6" stroke-width="8" fill="none" stroke-linejoin="round"/><path d="M316 129 L1123 127" stroke="#f3f4f6" stroke-width="9" fill="none" stroke-linejoin="round"/><path d="M648 0 L660 139" stroke="#f3f4f6" stroke-width="10" fill="none" stroke-linejoin="round"/><path d="M582 0 L563 79 L560 139" stroke="#f3f4f6" stroke-width="8" fill="none" stroke-linejoin="round"/><path d="M348 19 L353 99" stroke="#f3f4f6" stroke-width="7" fill="none" stroke-linejoin="round"/><path d="M316 45 L418 45" stroke="#f3f4f6" stroke-width="7" fill="none" stroke-linejoin="round"/><path d="M316 99 L408 64" stroke="#f3f4f6" stroke-width="7" fill="none" stroke-linejoin="round"/><path d="M0 114 L128 114 L200 127 L348 74" stroke="#f3f4f6" stroke-width="8" fill="none" stroke-linejoin="round"/><path d="M716 0 L738 19 L748 39" stroke="#f3f4f6" stroke-width="7" fill="none" stroke-linejoin="round"/><path d="M728 13 L825 91 L886 139" stroke="#f3f4f6" stroke-width="9" fill="none" stroke-linejoin="round"/><path d="M830 0 L830 89" stroke="#f3f4f6" stroke-width="7" fill="none" stroke-linejoin="round"/><path d="M860 129 L860 74 L938 71" stroke="#f3f4f6" stroke-width="7" fill="none" stroke-linejoin="round"/><path d="M950 0 L958 125" stroke="#f3f4f6" stroke-width="8" fill="none" stroke-linejoin="round"/><path d="M1013 0 L1048 129" stroke="#f3f4f6" stroke-width="8" fill="none" stroke-linejoin="round"/><path d="M958 57 L1123 19" stroke="#f3f4f6" stroke-width="7" fill="none" stroke-linejoin="round"/><path d="M488 0 L493 84" stroke="#f3f4f6" stroke-width="7" fill="none" stroke-linejoin="round"/><path d="M348 0 L488 4" stroke="#f3f4f6" stroke-width="7" fill="none" stroke-linejoin="round"/><path d="M518 0 L528 139" stroke="#f3f4f6" stroke-width="6" fill="none" stroke-linejoin="round"/><path d="M423 0 L423 139" stroke="#d9dee6" stroke-width="11" fill="none" stroke-linejoin="round"/><path d="M429 47 L548 44 L648 40 L658 45 L748 82" stroke="#d9dee6" stroke-width="6" fill="none" stroke-linejoin="round"/><path d="M429 84 L648 79" stroke="#d9dee6" stroke-width="6" fill="none" stroke-linejoin="round"/><path d="M316 129 L1123 127" stroke="#d9dee6" stroke-width="7" fill="none" stroke-linejoin="round"/><path d="M648 0 L660 139" stroke="#d9dee6" stroke-width="8" fill="none" stroke-linejoin="round"/><path d="M582 0 L563 79 L560 139" stroke="#d9dee6" stroke-width="6" fill="none" stroke-linejoin="round"/><path d="M348 19 L353 99" stroke="#d9dee6" stroke-width="5" fill="none" stroke-linejoin="round"/><path d="M316 45 L418 45" stroke="#d9dee6" stroke-width="5" fill="none" stroke-linejoin="round"/><path d="M316 99 L408 64" stroke="#d9dee6" stroke-width="5" fill="none" stroke-linejoin="round"/><path d="M0 114 L128 114 L200 127 L348 74" stroke="#d9dee6" stroke-width="6" fill="none" stroke-linejoin="round"/><path d="M716 0 L738 19 L748 39" stroke="#d9dee6" stroke-width="5" fill="none" stroke-linejoin="round"/><path d="M728 13 L825 91 L886 139" stroke="#d9dee6" stroke-width="7" fill="none" stroke-linejoin="round"/><path d="M830 0 L830 89" stroke="#d9dee6" stroke-width="5" fill="none" stroke-linejoin="round"/><path d="M860 129 L860 74 L938 71" stroke="#d9dee6" stroke-width="5" fill="none" stroke-linejoin="round"/><path d="M950 0 L958 125" stroke="#d9dee6" stroke-width="6" fill="none" stroke-linejoin="round"/><path d="M1013 0 L1048 129" stroke="#d9dee6" stroke-width="6" fill="none" stroke-linejoin="round"/><path d="M958 57 L1123 19" stroke="#d9dee6" stroke-width="5" fill="none" stroke-linejoin="round"/><path d="M488 0 L493 84" stroke="#d9dee6" stroke-width="5" fill="none" stroke-linejoin="round"/><path d="M348 0 L488 4" stroke="#d9dee6" stroke-width="5" fill="none" stroke-linejoin="round"/><path d="M518 0 L528 139" stroke="#d9dee6" stroke-width="4" fill="none" stroke-linejoin="round"/><path d="M726 0 L816 0 L811 24 Q798 44 766 47 L756 43 Q743 24 726 7 Z" fill="#c3ebcf"/><path d="M740 0 L798 0 Q798 29 768 31 Q748 19 740 0 Z" fill="#b6e5c4"/><rect x="429" y="89" width="22" height="6" fill="#c6ecd2"/><path d="M150 124 Q168 121 188 131 L153 131 Z" fill="#c6ecd2"/><path d="M346 152 L416 113 Q424 106 440 106 L648 105 Q678 106 748 127 L813 151" stroke="#8dd7ec" stroke-width="12.5" fill="none"/><path d="M336 144 L413 103 Q422 97.5 440 97.5 L648 96.5 Q683 98 753 119 L823 144" stroke="#5fbf8f" stroke-width="0.9" fill="none"/><path d="M360 149 L423 119 Q431 114 443 114 L648 113.5 Q678 115 743 135 L788 149" stroke="#5fbf8f" stroke-width="0.9" fill="none"/><rect x="867" y="75" width="20" height="46" fill="#f4eedd"/><path d="M860 129 V79 Q860 71 870 71 H938" stroke="#d5dbe3" stroke-width="4" fill="none"/><path d="M893 87 L910 87 L916 107 L896 109 Z" stroke="#5cbf8a" stroke-width="1" fill="none"/><path d="M1100 15 Q1103 37 1118 47" stroke="#5cbf8a" stroke-width="0.8" fill="none"/><path d="M415 11 L419 59 L417 79" stroke="#222" stroke-width="1.6" fill="none"/><path d="M413 97 L408 134" stroke="#222" stroke-width="1.6" fill="none"/><text x="0" y="0" transform="translate(428,141) rotate(-90)" font-family="Liberation Sans,sans-serif" font-size="14" font-weight="bold" fill="#4a4f55" stroke="#fff" stroke-width="2.5" paint-order="stroke">nbashi St</text><g transform="translate(428,28)"><path d="M-5 9 L0 15 L5 9 Z" fill="#fff"/><circle r="11" fill="#fff"/><circle r="9.5" fill="#1a73e8"/><rect x="-5" y="-4" width="10" height="8" fill="#fff"/><rect x="-3" y="0" width="3" height="4" fill="#1a73e8"/></g><text x="400" y="12" font-family="Liberation Sans,sans-serif" font-size="11.5" fill="#1a73e8" stroke="#fff" stroke-width="2.5" paint-order="stroke">中野新橋店</text><text x="400" y="1" font-family="Liberation Sans,sans-serif" font-size="11" fill="#1a73e8" stroke="#fff" stroke-width="2.5" paint-order="stroke">ビジネスホテル</text><g transform="translate(570,69)"><path d="M-5 9 L0 15 L5 9 Z" fill="#fff"/><circle r="11" fill="#fff"/><circle r="9.5" fill="#f37c20"/><path d="M-4.5 -4 H3 V2 Q3 4 1 4 H-2.5 Q-4.5 4 -4.5 2 Z M3 -2.5 H5 V1 H3" fill="#fff"/><rect x="-5" y="5" width="9" height="1.3" fill="#fff"/></g><text font-family="Liberation Sans,sans-serif" font-size="13.5" fill="#e37400" stroke="#fff" stroke-width="2.5" paint-order="stroke"><tspan x="543" y="101">COFFEE JAZZ</tspan><tspan x="543" y="114">GENIUS (コーヒー…</tspan></text><text x="448" y="112" font-family="Liberation Sans,sans-serif" font-size="15" fill="#1e8a9e">Kanda River</text><text font-family="Liberation Sans,sans-serif" font-size="11" fill="#2a8f5a" stroke="#fff" stroke-width="2" paint-order="stroke" text-anchor="middle"><tspan x="778" y="10">本二東郷</tspan><tspan x="778" y="21">やすらぎ公園</tspan></text><text font-family="Liberation Sans,sans-serif" font-size="13.5" fill="#5f6368" stroke="#fff" stroke-width="2.5" paint-order="stroke" text-anchor="middle"><tspan x="907" y="14">Tokyo</tspan><tspan x="907" y="28">Polytechnic</tspan><tspan x="907" y="42">University</tspan><tspan x="907" y="56">Nakano...</tspan><tspan x="907" y="67" font-size="11.5">東京工芸大学</tspan></text><g transform="translate(907,84)"><path d="M-5 9 L0 15 L5 9 Z" fill="#fff"/><circle r="11" fill="#fff"/><circle r="9.5" fill="#70808f"/><text x="0" y="5" text-anchor="middle" font-family="Liberation Sans,sans-serif" font-size="13" font-weight="bold" fill="#fff">文</text></g><text font-family="Liberation Sans,sans-serif" font-size="14.5" fill="#5f6368" stroke="#fff" stroke-width="2.5" paint-order="stroke"><tspan x="853" y="124">Yatsumitake shrine</tspan><tspan x="853" y="136" font-size="11.5">八津御嶽神社</tspan></text><text x="0" y="144" font-family="Liberation Sans,sans-serif" font-size="11" fill="#5f6368" stroke="#fff" stroke-width="2" paint-order="stroke">SHOME</text><path d="M491 126 H500 M491 126 L495 123 M491 126 L495 129" stroke="#70757a" stroke-width="1.5" fill="none"/><rect x="1106.5" y="79.5" width="20" height="44" fill="#eef0f3" stroke="#111" stroke-width="1"/><text x="1111" y="91" font-family="Liberation Sans,sans-serif" font-size="10" fill="#333">Na</text><circle cx="30" cy="10" r="10" fill="#5f6c78" stroke="#fff" stroke-width="1.5"/></svg><div id="mcard"><div class="mt">2-chōme-15-17 Yayoichō</div><div class="ma">2-chōme-15-17 Yayoichō, Nakano<br>City, Tokyo 164-0013</div><div class="mv">View larger map</div>
<svg style="position:absolute;left:248px;top:13px" width="22" height="22" viewBox="0 0 22 22"><path d="M1 3.8 L3.6 1.2 L10.6 8.2 L8 10.8 Z" fill="#b9d4f6"/><path d="M9.75 20.2 V13 Q9.75 9.6 12.6 7 L15.6 4.2" stroke="#5f9de6" stroke-width="4.3" fill="none"/><path d="M12.3 1.2 H19 V7.9 Z" fill="#5f9de6"/></svg>
<div class="md">Directions</div></div></div>
<div id="tocline"></div>
 <div class="toc" style="top:102.0px"><span class="pi"><svg width="15" height="15" viewBox="0 0 24 24"><path fill="#ff1493" d="M3 17.25V21h3.75L17.81 9.94l-3.75-3.75L3 17.25zM20.71 7.04c.39-.39.39-1.02 0-1.41l-2.34-2.34c-.39-.39-1.02-.39-1.41 0l-1.83 1.83 3.75 3.75 1.83-1.83z"/></svg></span><span class="tt">ページトップ</span></div>
 <div class="toc" style="top:128.5px"><span class="pi"><svg width="15" height="15" viewBox="0 0 24 24"><path fill="#dcdcdc" d="M3 17.25V21h3.75L17.81 9.94l-3.75-3.75L3 17.25zM20.71 7.04c.39-.39.39-1.02 0-1.41l-2.34-2.34c-.39-.39-1.02-.39-1.41 0l-1.83 1.83 3.75 3.75 1.83-1.83z"/></svg></span><span class="tt">お知らせ</span></div>
 <div class="toc" style="top:155.0px"><span class="pi"><svg width="15" height="15" viewBox="0 0 24 24"><path fill="#dcdcdc" d="M3 17.25V21h3.75L17.81 9.94l-3.75-3.75L3 17.25zM20.71 7.04c.39-.39.39-1.02 0-1.41l-2.34-2.34c-.39-.39-1.02-.39-1.41 0l-1.83 1.83 3.75 3.75 1.83-1.83z"/></svg></span><span class="tt">キーワード</span></div>
 <div class="toc" style="top:181.5px"><span class="pi"><svg width="15" height="15" viewBox="0 0 24 24"><path fill="#dcdcdc" d="M3 17.25V21h3.75L17.81 9.94l-3.75-3.75L3 17.25zM20.71 7.04c.39-.39.39-1.02 0-1.41l-2.34-2.34c-.39-.39-1.02-.39-1.41 0l-1.83 1.83 3.75 3.75 1.83-1.83z"/></svg></span><span class="tt">基本情報</span></div>
 <div class="toc" style="top:208.0px"><span class="pi"><svg width="15" height="15" viewBox="0 0 24 24"><path fill="#dcdcdc" d="M3 17.25V21h3.75L17.81 9.94l-3.75-3.75L3 17.25zM20.71 7.04c.39-.39.39-1.02 0-1.41l-2.34-2.34c-.39-.39-1.02-.39-1.41 0l-1.83 1.83 3.75 3.75 1.83-1.83z"/></svg></span><span class="tt">住所</span></div>
 <div class="toc" style="top:234.5px"><span class="pi"><svg width="15" height="15" viewBox="0 0 24 24"><path fill="#dcdcdc" d="M3 17.25V21h3.75L17.81 9.94l-3.75-3.75L3 17.25zM20.71 7.04c.39-.39.39-1.02 0-1.41l-2.34-2.34c-.39-.39-1.02-.39-1.41 0l-1.83 1.83 3.75 3.75 1.83-1.83z"/></svg></span><span class="tt">地図</span></div>
 <div class="toc" style="top:261.0px"><span class="pi"><svg width="15" height="15" viewBox="0 0 24 24"><path fill="#dcdcdc" d="M3 17.25V21h3.75L17.81 9.94l-3.75-3.75L3 17.25zM20.71 7.04c.39-.39.39-1.02 0-1.41l-2.34-2.34c-.39-.39-1.02-.39-1.41 0l-1.83 1.83 3.75 3.75 1.83-1.83z"/></svg></span><span class="tt">写真</span></div>
 <div class="toc" style="top:287.5px"><span class="pi"><svg width="15" height="15" viewBox="0 0 24 24"><path fill="#dcdcdc" d="M3 17.25V21h3.75L17.81 9.94l-3.75-3.75L3 17.25zM20.71 7.04c.39-.39.39-1.02 0-1.41l-2.34-2.34c-.39-.39-1.02-.39-1.41 0l-1.83 1.83 3.75 3.75 1.83-1.83z"/></svg></span><span class="tt">予約制について</span></div>
 <div class="toc" style="top:314.0px"><span class="pi"><svg width="15" height="15" viewBox="0 0 24 24"><path fill="#dcdcdc" d="M3 17.25V21h3.75L17.81 9.94l-3.75-3.75L3 17.25zM20.71 7.04c.39-.39.39-1.02 0-1.41l-2.34-2.34c-.39-.39-1.02-.39-1.41 0l-1.83 1.83 3.75 3.75 1.83-1.83z"/></svg></span><span class="tt">場所、交通機関</span></div>
 <div class="toc" style="top:340.5px"><span class="pi"><svg width="15" height="15" viewBox="0 0 24 24"><path fill="#dcdcdc" d="M3 17.25V21h3.75L17.81 9.94l-3.75-3.75L3 17.25zM20.71 7.04c.39-.39.39-1.02 0-1.41l-2.34-2.34c-.39-.39-1.02-.39-1.41 0l-1.83 1.83 3.75 3.75 1.83-1.83z"/></svg></span><span class="tt">診療時間</span></div>
 <div class="toc" style="top:367.0px"><span class="pi"><svg width="15" height="15" viewBox="0 0 24 24"><path fill="#dcdcdc" d="M3 17.25V21h3.75L17.81 9.94l-3.75-3.75L3 17.25zM20.71 7.04c.39-.39.39-1.02 0-1.41l-2.34-2.34c-.39-.39-1.02-.39-1.41 0l-1.83 1.83 3.75 3.75 1.83-1.83z"/></svg></span><span class="tt">診療のご案内</span></div>
 <div class="toc" style="top:393.5px"><span class="pi"><svg width="15" height="15" viewBox="0 0 24 24"><path fill="#dcdcdc" d="M3 17.25V21h3.75L17.81 9.94l-3.75-3.75L3 17.25zM20.71 7.04c.39-.39.39-1.02 0-1.41l-2.34-2.34c-.39-.39-1.02-.39-1.41 0l-1.83 1.83 3.75 3.75 1.83-1.83z"/></svg></span><span class="tt">プロフィール</span></div>
 <div class="toc" style="top:420.0px"><span class="pi"><svg width="15" height="15" viewBox="0 0 24 24"><path fill="#dcdcdc" d="M3 17.25V21h3.75L17.81 9.94l-3.75-3.75L3 17.25zM20.71 7.04c.39-.39.39-1.02 0-1.41l-2.34-2.34c-.39-.39-1.02-.39-1.41 0l-1.83 1.83 3.75 3.75 1.83-1.83z"/></svg></span><span class="tt">病院からのメッセージ</span></div>
 <div class="toc" style="top:446.5px"><span class="pi"><svg width="15" height="15" viewBox="0 0 24 24"><path fill="#dcdcdc" d="M3 17.25V21h3.75L17.81 9.94l-3.75-3.75L3 17.25zM20.71 7.04c.39-.39.39-1.02 0-1.41l-2.34-2.34c-.39-.39-1.02-.39-1.41 0l-1.83 1.83 3.75 3.75 1.83-1.83z"/></svg></span><span class="tt">リンク情報</span></div>
</body></html>
